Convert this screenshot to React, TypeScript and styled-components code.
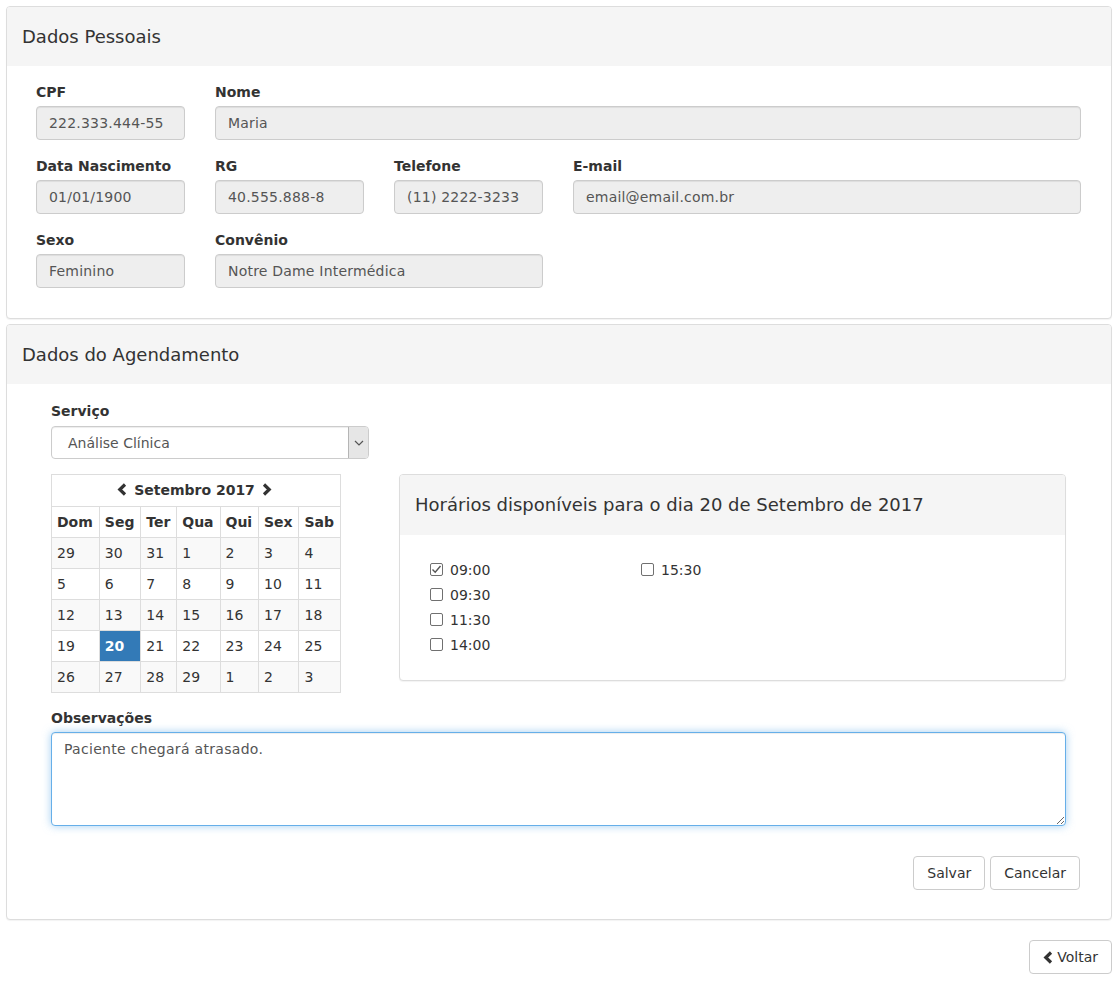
import React from 'react';
import styled, { createGlobalStyle } from 'styled-components';

const GlobalStyle = createGlobalStyle`
  * {
    box-sizing: border-box;
  }

  body {
    margin: 0;
    background: #fff;
    color: #333;
    font-family: 'DejaVu Sans', Verdana, sans-serif;
    font-size: 14px;
    line-height: 20px;
  }
`;

const Page = styled.div`
  display: flex;
  flex-direction: column;
  padding: 6px 7px 7px 6px;
`;

const Panel = styled.section<{ $gap?: number }>`
  border: 1px solid #ddd;
  border-radius: 4px;
  background: #fff;
  box-shadow: 0 1px 1px rgba(0, 0, 0, 0.05);
  margin-bottom: ${({ $gap }) => $gap ?? 0}px;
  overflow: hidden;
`;

const PanelHeading = styled.div<{ $height?: number }>`
  height: ${({ $height }) => $height ?? 59}px;
  display: flex;
  align-items: center;
  padding: 0 15px;
  background: #f5f5f5;
`;

const PanelTitle = styled.h3`
  margin: 0;
  font-size: 18px;
  font-weight: normal;
  color: #333;
`;

const PersonalBody = styled.div`
  display: grid;
  grid-template-columns: 149px 149px 149px 1fr;
  column-gap: 30px;
  row-gap: 16px;
  padding: 16px 30px 30px 29px;
`;

const Field = styled.div<{ $col?: string }>`
  display: flex;
  flex-direction: column;
  grid-column: ${({ $col }) => $col ?? 'auto'};
`;

const Label = styled.label`
  display: block;
  font-weight: bold;
  margin-bottom: 4px;
`;

const Input = styled.div`
  height: 34px;
  display: flex;
  align-items: center;
  padding: 0 12px;
  border: 1px solid #ccc;
  border-radius: 4px;
  background: #eee;
  color: #555;
  letter-spacing: 0.2px;
  box-shadow: inset 0 1px 1px rgba(0, 0, 0, 0.075);
  white-space: nowrap;
  overflow: hidden;
`;

const ScheduleBody = styled.div`
  display: flex;
  flex-direction: column;
  padding: 17px 30px 29px 29px;
`;

const FormArea = styled.div`
  display: flex;
  flex-direction: column;
  padding: 0 15px;
`;

const ServiceLabel = styled(Label)`
  margin-bottom: 5px;
`;

const SelectBox = styled.div`
  width: 318px;
  height: 33px;
  display: flex;
  border: 1px solid #ccc;
  border-radius: 4px;
  background: #fff;
  box-shadow: inset 0 1px 1px rgba(0, 0, 0, 0.075);
  overflow: hidden;
`;

const SelectValue = styled.div`
  flex: 1;
  display: flex;
  align-items: center;
  padding-left: 16px;
  color: #555;
`;

const SelectArrow = styled.div`
  width: 20px;
  display: flex;
  align-items: center;
  justify-content: center;
  background: #e6e6e6;
  border-left: 1px solid #b5b5b5;
`;

const CalendarRow = styled.div`
  display: grid;
  grid-template-columns: 318px 1fr;
  column-gap: 30px;
  align-items: start;
  margin-top: 15px;
`;

const CalendarTable = styled.table`
  border-collapse: collapse;
  border: 1px solid #ddd;
  width: 290px;
`;

const CalendarCaption = styled.th`
  height: 32px;
  padding: 0 5px;
  border: 1px solid #ddd;
  font-weight: bold;
  text-align: center;
`;

const CaptionInner = styled.span`
  display: inline-flex;
  align-items: center;
  gap: 7px;
  margin-left: -3px;
`;

const DayHead = styled.th`
  height: 31px;
  padding: 0 5px;
  border: 1px solid #ddd;
  font-weight: bold;
  text-align: left;
`;

const WeekRow = styled.tr<{ $striped: boolean }>`
  background: ${({ $striped }) => ($striped ? '#f9f9f9' : '#fff')};
`;

const DayCell = styled.td<{ $selected?: boolean }>`
  height: 31px;
  padding: 0 5px;
  border: 1px solid #ddd;
  background: ${({ $selected }) => ($selected ? '#337ab7' : 'transparent')};
  color: ${({ $selected }) => ($selected ? '#fff' : '#333')};
  font-weight: ${({ $selected }) => ($selected ? 'bold' : 'normal')};
`;

const SlotsBody = styled.div`
  display: grid;
  grid-template-columns: 211px 211px;
  padding: 22px 30px 23px 30px;
`;

const SlotColumn = styled.div`
  display: flex;
  flex-direction: column;
`;

const Slot = styled.label`
  display: flex;
  align-items: center;
  height: 25px;
  gap: 7px;
`;

const CheckBox = styled.span`
  width: 13px;
  height: 13px;
  border: 1px solid #707070;
  border-radius: 2px;
  background: #fff;
  display: flex;
  align-items: center;
  justify-content: center;
`;

const NotesLabel = styled(Label)`
  margin-top: 15px;
`;

const NotesArea = styled.textarea`
  height: 94px;
  padding: 6px 12px;
  border: 1px solid #66afe9;
  border-radius: 4px;
  outline: 0;
  resize: vertical;
  font-family: 'DejaVu Sans', Verdana, sans-serif;
  font-size: 14px;
  line-height: 20px;
  letter-spacing: 0.3px;
  color: #555;
  box-shadow: inset 0 1px 1px rgba(0, 0, 0, 0.075), 0 0 8px rgba(102, 175, 233, 0.6);
`;

const Actions = styled.div`
  display: flex;
  justify-content: flex-end;
  gap: 5px;
  margin: 30px 1px 0 0;
`;

const Button = styled.button`
  height: 34px;
  display: inline-flex;
  align-items: center;
  gap: 4px;
  padding: 0 13px;
  border: 1px solid #ccc;
  border-radius: 4px;
  background: #fff;
  color: #333;
  font-family: 'DejaVu Sans', Verdana, sans-serif;
  font-size: 14px;
  cursor: pointer;
`;

const Footer = styled.div`
  display: flex;
  justify-content: flex-end;
  margin-top: 20px;
`;

function Chevron({ dir }: { dir: 'left' | 'right' }) {
  const points = dir === 'left' ? '8,1.5 2.8,6.5 8,11.5' : '2,1.5 7.2,6.5 2,11.5';
  return (
    <svg width="10" height="13" viewBox="0 0 10 13">
      <polyline points={points} fill="none" stroke="#333" strokeWidth="3.2" strokeLinejoin="miter" />
    </svg>
  );
}

const weeks = [
  ['29', '30', '31', '1', '2', '3', '4'],
  ['5', '6', '7', '8', '9', '10', '11'],
  ['12', '13', '14', '15', '16', '17', '18'],
  ['19', '20', '21', '22', '23', '24', '25'],
  ['26', '27', '28', '29', '1', '2', '3'],
];

const days = ['Dom', 'Seg', 'Ter', 'Qua', 'Qui', 'Sex', 'Sab'];

const slotColumns = [
  [
    { time: '09:00', checked: true },
    { time: '09:30', checked: false },
    { time: '11:30', checked: false },
    { time: '14:00', checked: false },
  ],
  [{ time: '15:30', checked: false }],
];

export default function App() {
  return (
    <>
      <GlobalStyle />
      <Page>
        <Panel $gap={5}>
          <PanelHeading>
            <PanelTitle>Dados Pessoais</PanelTitle>
          </PanelHeading>
          <PersonalBody>
            <Field>
              <Label>CPF</Label>
              <Input>222.333.444-55</Input>
            </Field>
            <Field $col="2 / 5">
              <Label>Nome</Label>
              <Input>Maria</Input>
            </Field>
            <Field>
              <Label>Data Nascimento</Label>
              <Input>01/01/1900</Input>
            </Field>
            <Field>
              <Label>RG</Label>
              <Input>40.555.888-8</Input>
            </Field>
            <Field>
              <Label>Telefone</Label>
              <Input>(11) 2222-3233</Input>
            </Field>
            <Field>
              <Label>E-mail</Label>
              <Input>email@email.com.br</Input>
            </Field>
            <Field>
              <Label>Sexo</Label>
              <Input>Feminino</Input>
            </Field>
            <Field $col="2 / 4">
              <Label>Convênio</Label>
              <Input>Notre Dame Intermédica</Input>
            </Field>
          </PersonalBody>
        </Panel>

        <Panel>
          <PanelHeading>
            <PanelTitle>Dados do Agendamento</PanelTitle>
          </PanelHeading>
          <ScheduleBody>
            <FormArea>
              <ServiceLabel>Serviço</ServiceLabel>
              <SelectBox>
                <SelectValue>Análise Clínica</SelectValue>
                <SelectArrow>
                  <svg width="10" height="6" viewBox="0 0 10 6">
                    <polyline points="1,1 5,5 9,1" fill="none" stroke="#555" strokeWidth="1.2" />
                  </svg>
                </SelectArrow>
              </SelectBox>

              <CalendarRow>
                <CalendarTable>
                  <thead>
                    <tr>
                      <CalendarCaption colSpan={7}>
                        <CaptionInner>
                          <Chevron dir="left" />
                          Setembro 2017
                          <Chevron dir="right" />
                        </CaptionInner>
                      </CalendarCaption>
                    </tr>
                    <tr>
                      {days.map((d) => (
                        <DayHead key={d}>{d}</DayHead>
                      ))}
                    </tr>
                  </thead>
                  <tbody>
                    {weeks.map((week, i) => (
                      <WeekRow key={i} $striped={i % 2 === 0}>
                        {week.map((day, j) => (
                          <DayCell key={j} $selected={i === 3 && day === '20'}>
                            {day}
                          </DayCell>
                        ))}
                      </WeekRow>
                    ))}
                  </tbody>
                </CalendarTable>

                <Panel>
                  <PanelHeading $height={60}>
                    <PanelTitle>Horários disponíveis para o dia 20 de Setembro de 2017</PanelTitle>
                  </PanelHeading>
                  <SlotsBody>
                    {slotColumns.map((col, i) => (
                      <SlotColumn key={i}>
                        {col.map((slot) => (
                          <Slot key={slot.time}>
                            <CheckBox>
                              {slot.checked && (
                                <svg width="11" height="11" viewBox="0 0 11 11">
                                  <polyline points="1.5,5.5 4.2,8.2 9.5,2" fill="none" stroke="#555" strokeWidth="1.4" />
                                </svg>
                              )}
                            </CheckBox>
                            {slot.time}
                          </Slot>
                        ))}
                      </SlotColumn>
                    ))}
                  </SlotsBody>
                </Panel>
              </CalendarRow>

              <NotesLabel>Observações</NotesLabel>
              <NotesArea readOnly value="Paciente chegará atrasado." />
            </FormArea>

            <Actions>
              <Button>Salvar</Button>
              <Button>Cancelar</Button>
            </Actions>
          </ScheduleBody>
        </Panel>

        <Footer>
          <Button>
            <Chevron dir="left" />
            Voltar
          </Button>
        </Footer>
      </Page>
    </>
  );
}
